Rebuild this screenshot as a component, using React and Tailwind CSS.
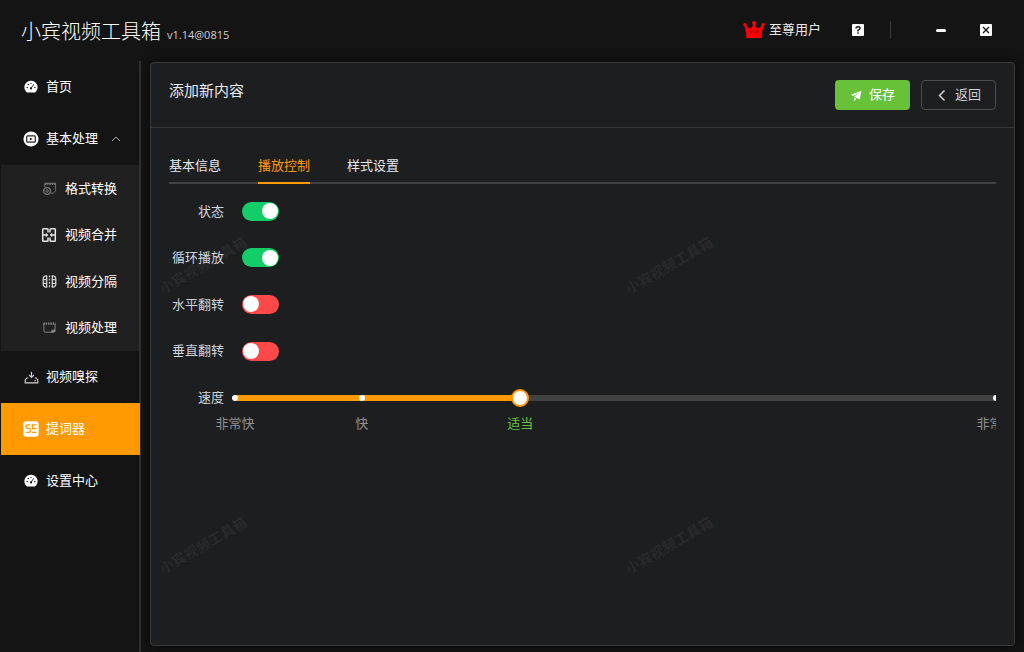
import { useState } from 'react';
import clsx from 'clsx';

const GaugeIcon = () => (
  <svg viewBox="0 0 16 16" className="size-[14px]">
    <path fill="#fff" d="M8 .8a7.500 7.500 0 0 0-6 12c.7.900 1.500 1.500 2.500 1.500h7c1 0 1.800-.6 2.500-1.500A7.500 7.500 0 0 0 8 .8z" />
    <g fill="#141414">
      <circle cx="3.600" cy="8.600" r=".8" />
      <circle cx="4.900" cy="5.200" r=".8" />
      <circle cx="8" cy="3.800" r=".8" />
      <circle cx="12.400" cy="8.600" r=".8" />
      <circle cx="8" cy="9.600" r="1.200" />
    </g>
    <path stroke="#141414" strokeWidth="1" strokeLinecap="round" d="M8 9.600l3-4.400" />
  </svg>
);

const ProcessIcon = () => (
  <svg viewBox="0 0 16 16" className="size-[16px]" fill="none">
    <circle cx="8" cy="8" r="7.600" fill="#fff" />
    <rect x="3.700" y="4.800" width="8.600" height="6.400" rx="1" stroke="#222" strokeWidth="1.200" />
    <path d="M6.800 6.400v3.200L9.600 8z" fill="#222" />
  </svg>
);

const FormatIcon = () => (
  <svg viewBox="0 0 16 16" className="size-[15px]" fill="none" stroke="#777">
    <path d="M3 6.500V2.500h11.500v8L12 13H9.500" />
    <path d="M3 3h11.500" strokeWidth="2.500" strokeDasharray="1.500 1" />
    <circle cx="5.400" cy="10.600" r="3.600" strokeWidth="1.400" />
    <circle cx="5.400" cy="10.600" r="1.300" />
  </svg>
);

const MergeIcon = () => (
  <svg viewBox="0 0 16 16" className="size-[16px]" fill="none" stroke="#e5e5e5" strokeWidth="1.500">
    <path d="M7 5.500V2.500q0-.8-.8-.8H2.500q-.8 0-.8.8v11q0 .8.8.8h3.700q.8 0 .8-.8v-3M9 5.500V2.500q0-.8.8-.8h3.700q.8 0 .8.8v11q0 .8-.8.8H9.800q-.8 0-.8-.8v-3" />
    <path d="M1.700 8h4M10.300 8h4" />
    <path d="M4.800 5.800L7.400 8l-2.600 2.200zM11.200 5.800L8.600 8l2.600 2.200z" fill="#e5e5e5" stroke="none" />
  </svg>
);

const SplitIcon = () => (
  <svg viewBox="0 0 16 16" className="size-[15px]" fill="none" stroke="#d4d4d4" strokeWidth="1.400">
    <path d="M5.500 2H4Q1.300 2.500 1.300 5v6q0 2.500 2.700 3h1.500M10.500 2H12q2.700.5 2.700 3v6q0 2.500-2.700 3h-1.500" />
    <path d="M5 2v12M11 2v12M1.500 6H5M1.500 10H5M11 6h3.500M11 10h3.500" />
    <path d="M8 1.500v13" strokeDasharray="2 1.500" />
  </svg>
);

const ClipIcon = () => (
  <svg viewBox="0 0 16 16" className="size-[15px]" fill="none" stroke="#888">
    <path d="M2 4v7.500q0 1.500 1.500 1.500h6.500l4-3V4" />
    <path d="M1.500 3.800h13" strokeWidth="2.500" strokeDasharray="1.500 1" />
    <path d="M10 13.500V10.500h4.500v1.500l-2 1.500z" fill="#888" stroke="none" />
  </svg>
);

const DownloadIcon = () => (
  <svg viewBox="0 0 16 16" className="size-[15px]" fill="none" stroke="#d4d4d4" strokeWidth="1.200">
    <path d="M4.500 8.500H3L1.300 10.500v3.200h13.400v-3.200L13 8.500h-1.500" />
    <path d="M8 1.800v6M5.300 5.300L8 8 10.700 5.300M11 11.500h1.800" />
  </svg>
);

const PromptIcon = () => (
  <svg viewBox="0 0 16 16" className="size-[16px]" fill="none" stroke="#ff9900" strokeWidth="1.300">
    <rect x=".3" y=".3" width="15.400" height="15.400" rx="3" fill="#fff" stroke="none" />
    <path d="M7.300 3.800H4.500Q3 3.800 3 5.600t1.500 1.800h1.500Q7.500 7.400 7.500 9.300t-1.500 2H2.800" />
    <path d="M8.500 3.800h5M9 7.500h4.500M9 11.300h4.500M9.500 4v3.500" />
  </svg>
);

const CrownIcon = () => (
  <svg viewBox="0 0 22 18" className="h-[18px] w-[22px]">
    <g fill="#ff0000">
      <circle cx="1.900" cy="3.800" r="1.700" />
      <circle cx="11" cy="2" r="1.900" />
      <circle cx="20.100" cy="3.800" r="1.700" />
      <path d="M1.500 4.500l1.300-.8Q5 7.800 7.200 7.300 9.500 6.800 10.200 3h1.600q.7 3.800 3 4.300 2.200.5 4.400-3.600l1.300.8-2 9.500H3.500z" />
      <path d="M3.500 13.500h15l.3 3.600H3.200z" />
    </g>
    <path d="M6.800 9.300l1.400 3.200 1.300-3.200M11.200 9.300v3.200M13 12.600V9.500h1.300q1 0 1 .8t-1 .9H13" fill="none" stroke="#8a0000" strokeWidth=".8" />
  </svg>
);

const menu = [
  { label: '首页', icon: <GaugeIcon /> },
  {
    label: '基本处理',
    icon: <ProcessIcon />,
    children: [
      { label: '格式转换', icon: <FormatIcon /> },
      { label: '视频合并', icon: <MergeIcon /> },
      { label: '视频分隔', icon: <SplitIcon /> },
      { label: '视频处理', icon: <ClipIcon /> },
    ],
  },
  { label: '视频嗅探', icon: <DownloadIcon /> },
  { label: '提词器', icon: <PromptIcon />, active: true },
  { label: '设置中心', icon: <GaugeIcon /> },
];

const tabs = ['基本信息', '播放控制', '样式设置'];

const marks = [
  { value: 0.1, label: '非常快' },
  { value: 0.5, label: '快' },
  { value: 1, label: '适当' },
  { value: 2.5, label: '非常慢' },
];

const MIN = 0.1;
const MAX = 2.5;
const percent = (v) => `${((v - MIN) / (MAX - MIN)) * 100}%`;

function Header() {
  return (
    <header className="flex h-[60px] shrink-0 items-center justify-between pr-8 pl-[21px] text-[#e8e8e8]">
      <h1 className="flex items-baseline gap-[6px] pt-1.5 text-[20px] leading-7 font-light text-white">
        小宾视频工具箱
        <small className="font-['Open_Sans'] text-[11px] font-normal text-[#d0d0d0]">v1.14@0815</small>
      </h1>
      <div className="flex items-center">
        <CrownIcon />
        <span className="ml-1 pb-0.5 text-[13px]">至尊用户</span>
        <button aria-label="帮助" className="ml-[31px]">
          <svg viewBox="0 0 12 12" className="size-[12px]" fill="none" stroke="#141414" strokeWidth="1.400">
            <rect width="12" height="12" rx="1" fill="#fff" stroke="none" />
            <path d="M4 4.600Q4 2.800 6 2.800t2 1.700Q8 5.500 6 6.200v1.200M6 8.300v1.400" />
          </svg>
        </button>
        <span className="ml-[26px] h-[18px] w-px bg-[#3a3a3a]" />
        <button aria-label="最小化" className="ml-[45px] flex h-[18px] w-[10px] items-center">
          <span className="h-[3px] w-full rounded-sm bg-white" />
        </button>
        <button aria-label="关闭" className="ml-[34px]">
          <svg viewBox="0 0 12 12" className="size-[12px]" stroke="#141414" strokeWidth="1.300">
            <rect width="12" height="12" rx="1" fill="#fff" stroke="none" />
            <path d="M3 3l6 6M9 3L3 9" />
          </svg>
        </button>
      </div>
    </header>
  );
}

function Sidebar() {
  return (
    <nav className="w-[141px] shrink-0 border-r-2 border-[#303030] pl-px text-[13px] text-white">
      {menu.map((item) => (
        <div key={item.label}>
          <a
            href="#"
            className={clsx('flex h-[52px] items-center pl-[22px]', item.active && '-mr-px bg-[#ff9900]')}
          >
            <span className="flex w-4 justify-center">{item.icon}</span>
            <span className="ml-[7px] pb-0.5">{item.label}</span>
            {item.children && (
              <svg viewBox="0 0 10 6" className="ml-[13px] h-[6px] w-[10px]" fill="none" stroke="#aaa">
                <path d="M1 5l4-4 4 4" />
              </svg>
            )}
          </a>
          {item.children && (
            <div className="grid h-[186px] grid-rows-4 bg-[#202020]">
              {item.children.map((child) => (
                <a href="#" key={child.label} className="flex items-center pl-[40px]">
                  <span className="flex w-4 justify-center">{child.icon}</span>
                  <span className="ml-2 pb-0.5">{child.label}</span>
                </a>
              ))}
            </div>
          )}
        </div>
      ))}
    </nav>
  );
}

function SwitchRow({ id, label, defaultChecked }) {
  return (
    <div className="flex items-center">
      <label htmlFor={id} className="w-[55px] pb-0.5 text-right">{label}</label>
      <input
        id={id}
        type="checkbox"
        role="switch"
        defaultChecked={defaultChecked}
        className="ml-[18px] flex h-[19px] w-[37px] appearance-none items-center rounded-full bg-[#ff4949] px-px before:size-[16px] before:rounded-full before:bg-white checked:justify-end checked:bg-[#13ce66]"
      />
    </div>
  );
}

function SpeedRow() {
  const [speed, setSpeed] = useState(1);

  return (
    <div className="flex items-center">
      <label htmlFor="speed" className="w-[55px] pb-0.5 text-right">速度</label>
      <div className="relative ml-[11px] h-[6px] flex-1 rounded-full bg-[#424243]">
        <div className="h-full rounded-full bg-[#ff9900]" style={{ width: percent(speed) }} />
        {marks.map((m) => (
          <div key={m.value} className="absolute top-0" style={{ left: percent(m.value) }}>
            <span className="absolute size-[6px] -translate-x-1/2 rounded-full bg-white" />
            <span
              className={clsx(
                'absolute top-[18px] -translate-x-1/2 leading-[20px] whitespace-nowrap',
                m.value === speed ? 'text-[#67c23a]' : 'text-[#8d9095]'
              )}
            >
              {m.label}
            </span>
          </div>
        ))}
        <input
          id="speed"
          type="range"
          min={MIN}
          max={MAX}
          step={0.1}
          value={speed}
          onChange={(e) => setSpeed(Number(e.target.value))}
          className="absolute -inset-x-[9px] -top-[6px] h-[18px] appearance-none bg-transparent [&::-webkit-slider-thumb]:size-[18px] [&::-webkit-slider-thumb]:appearance-none [&::-webkit-slider-thumb]:rounded-full [&::-webkit-slider-thumb]:border-2 [&::-webkit-slider-thumb]:border-solid [&::-webkit-slider-thumb]:border-[#ff9900] [&::-webkit-slider-thumb]:bg-white"
        />
      </div>
    </div>
  );
}

function Watermark() {
  return (
    <div className="pointer-events-none absolute inset-0 overflow-hidden text-[14px] font-bold text-white/6" aria-hidden="true">
      {['left-[52px] top-[202px]', 'left-[518px] top-[202px]', 'left-[52px] top-[482px]', 'left-[518px] top-[482px]'].map((pos) => (
        <span key={pos} className={clsx('absolute -translate-x-1/2 -translate-y-1/2 -rotate-30 whitespace-nowrap', pos)}>
          小宾视频工具箱
        </span>
      ))}
    </div>
  );
}

export default function App() {
  const [tab, setTab] = useState('播放控制');

  return (
    <div className="flex min-h-screen flex-col bg-[#141414] font-['Noto_Sans_CJK_SC',sans-serif]">
      <Header />
      <div className="flex flex-1">
        <div className="flex pt-px">
          <Sidebar />
        </div>
        <main className="relative mx-[9px] mt-[2px] mb-[6px] min-w-0 flex-1 rounded border border-[#3a3a3b] bg-[#1d1e1f] text-[13px] text-[#cfd3dc] shadow-[0_0_12px_rgba(0,0,0,0.7)]">
          <div className="flex items-start justify-between border-b border-[#363637] px-[18px] py-[17px]">
            <h2 className="text-[15px] leading-[20px] text-[#e5eaf3]">添加新内容</h2>
            <div className="flex gap-[11px]">
              <button className="flex h-[30px] w-[75px] items-center justify-center gap-[6px] rounded bg-[#67c23a] text-white">
                <svg viewBox="0 0 1024 1024" className="size-[13px]" fill="currentColor">
                  <path d="m64 448 832-320-128 704-446.080-243.328L832 192 242.816 545.536 64 448zm256 512V657.024L512 768 320 960z" />
                </svg>
                <span className="pb-0.5">保存</span>
              </button>
              <button className="flex h-[30px] w-[75px] items-center justify-center gap-[6px] rounded border border-[#4c4d4f]">
                <svg viewBox="0 0 13 13" className="size-[13px]" fill="none" stroke="currentColor" strokeWidth="1.500">
                  <path d="M8.500 1.500l-5 5 5 5" />
                </svg>
                <span className="pb-0.5">返回</span>
              </button>
            </div>
          </div>
          <div className="px-[18px] pt-[21px]">
            <div role="tablist" className="flex gap-[37px] border-b-2 border-[#414243]">
              {tabs.map((t) => (
                <button
                  key={t}
                  role="tab"
                  aria-selected={t === tab}
                  onClick={() => setTab(t)}
                  className={clsx(
                    '-mb-[2px] h-[35px] border-b-2 pb-0.5',
                    t === tab ? 'border-[#ff9900] text-[#ff9900]' : 'border-transparent text-[#e5eaf3]'
                  )}
                >
                  {t}
                </button>
              ))}
            </div>
            <form className="overflow-hidden pt-1 pb-7">
              <div className="grid h-[233px] grid-rows-5">
                <SwitchRow id="status" label="状态" defaultChecked />
                <SwitchRow id="loop" label="循环播放" defaultChecked />
                <SwitchRow id="flip-x" label="水平翻转" />
                <SwitchRow id="flip-y" label="垂直翻转" />
                <SpeedRow />
              </div>
            </form>
          </div>
          <Watermark />
        </main>
      </div>
    </div>
  );
}
